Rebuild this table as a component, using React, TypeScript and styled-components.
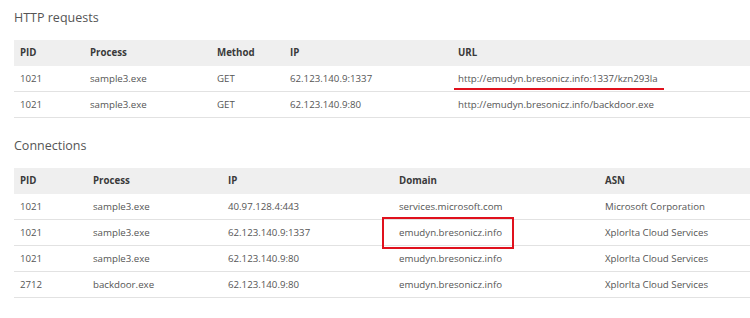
import styled, { createGlobalStyle } from "styled-components";

const GlobalStyle = createGlobalStyle`
  body {
    margin: 0;
    background: #ffffff;
    font-family: "Open Sans", "Liberation Sans", sans-serif;
  }
`;

type Column = { label: string; width?: number };

const httpColumns: Column[] = [
  { label: "PID", width: 70 },
  { label: "Process", width: 127 },
  { label: "Method", width: 73 },
  { label: "IP", width: 168 },
  { label: "URL" },
];

const httpRows = [
  ["1021", "sample3.exe", "GET", "62.123.140.9:1337", "http://emudyn.bresonicz.info:1337/kzn293la"],
  ["1021", "sample3.exe", "GET", "62.123.140.9:80", "http://emudyn.bresonicz.info/backdoor.exe"],
];

const connColumns: Column[] = [
  { label: "PID", width: 73 },
  { label: "Process", width: 135 },
  { label: "IP", width: 171 },
  { label: "Domain", width: 206 },
  { label: "ASN" },
];

const connRows = [
  ["1021", "sample3.exe", "40.97.128.4:443", "services.microsoft.com", "Microsoft Corporation"],
  ["1021", "sample3.exe", "62.123.140.9:1337", "emudyn.bresonicz.info", "Xplorlta Cloud Services"],
  ["1021", "sample3.exe", "62.123.140.9:80", "emudyn.bresonicz.info", "Xplorlta Cloud Services"],
  ["2712", "backdoor.exe", "62.123.140.9:80", "emudyn.bresonicz.info", "Xplorlta Cloud Services"],
];

const Page = styled.div`
  padding: 9px 0 0 14px;
  width: 736px;
`;

const SectionTitle = styled.h2<{ $first?: boolean }>`
  margin: ${({ $first }) => ($first ? "0" : "19px")} 0 13px 0;
  font-size: 12.5px;
  line-height: 18px;
  font-weight: 400;
  color: #555555;
`;

const Table = styled.table`
  width: 100%;
  border-collapse: collapse;
  table-layout: fixed;
`;

const HeadCell = styled.th`
  background: #efefef;
  padding: 0 6px;
  line-height: 26px;
  text-align: left;
  font-size: 9.7px;
  font-weight: 700;
  color: #3a3a3a;
`;

const Cell = styled.td`
  padding: 0 6px;
  font-size: 9.7px;
  line-height: 25px;
  color: #555555;
  border-bottom: 1px solid #e2e2e2;
  white-space: nowrap;
`;

const Underlined = styled.span`
  position: relative;

  &::after {
    content: "";
    position: absolute;
    left: -4px;
    right: -6px;
    bottom: -5px;
    height: 2px;
    background: #e0111d;
  }
`;

const Boxed = styled.span`
  position: relative;
  display: inline-block;
  vertical-align: top;

  &::after {
    content: "";
    position: absolute;
    left: -17px;
    right: -12px;
    top: -3px;
    bottom: -4px;
    border: 2px solid #e0111d;
    box-sizing: border-box;
  }
`;

const DataTable = ({
  columns,
  rows,
  mark,
}: {
  columns: Column[];
  rows: string[][];
  mark?: (row: number, col: number, value: string) => React.ReactNode;
}) => (
  <Table>
    <colgroup>
      {columns.map((c) => (
        <col key={c.label} style={c.width ? { width: c.width } : undefined} />
      ))}
    </colgroup>
    <thead>
      <tr>
        {columns.map((c) => (
          <HeadCell key={c.label}>{c.label}</HeadCell>
        ))}
      </tr>
    </thead>
    <tbody>
      {rows.map((row, r) => (
        <tr key={r}>
          {row.map((value, c) => (
            <Cell key={c}>{mark ? mark(r, c, value) : value}</Cell>
          ))}
        </tr>
      ))}
    </tbody>
  </Table>
);

export default function App() {
  return (
    <Page>
      <GlobalStyle />
      <SectionTitle $first>HTTP requests</SectionTitle>
      <DataTable
        columns={httpColumns}
        rows={httpRows}
        mark={(r, c, v) => (r === 0 && c === 4 ? <Underlined>{v}</Underlined> : v)}
      />

      <SectionTitle>Connections</SectionTitle>
      <DataTable
        columns={connColumns}
        rows={connRows}
        mark={(r, c, v) => (r === 1 && c === 3 ? <Boxed>{v}</Boxed> : v)}
      />
    </Page>
  );
}
